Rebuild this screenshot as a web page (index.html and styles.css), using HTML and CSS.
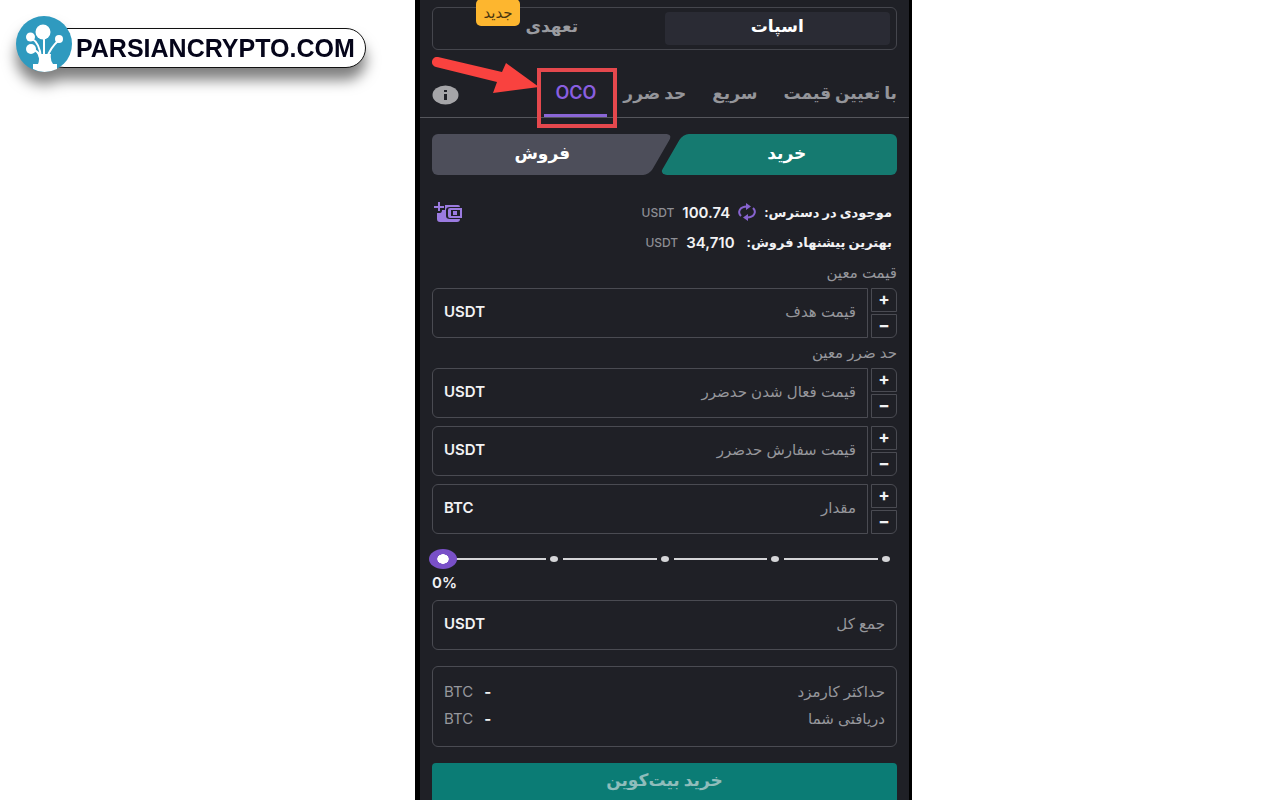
FILE: index.html
```html
<!DOCTYPE html>
<html lang="fa">
<head>
  <meta charset="UTF-8">
  <title>OCO</title>
  <meta name="viewport" content="width=device-width, initial-scale=1">
  <link rel="stylesheet" href="styles.css">
</head>
<body>
  <header class="site">
    <a class="brand" href="#">
      <svg class="brand-logo" viewBox="0 0 56 56" aria-hidden="true">
        <circle cx="28" cy="28" r="28" fill="#2f9abf"/>
        <g fill="#fff">
          <circle cx="27" cy="16" r="7.500"/>
          <circle cx="14.500" cy="21" r="4.500"/>
          <circle cx="43" cy="23" r="4"/>
          <circle cx="15" cy="33" r="5"/>
          <path d="M22 48Q24 43 22 38H35Q34 44 37 48H41V53Q28 59 17 53V48Z"/>
        </g>
        <g fill="none" stroke="#fff" stroke-width="2">
          <path d="M28 20V42M15 22Q24 27 25 42M43 24Q34 32 31 42M16 33Q23 35 24 42"/>
        </g>
      </svg>
      <span class="brand-name">PARSIANCRYPTO.COM</span>
    </a>
  </header>

  <main class="panel" dir="rtl">
    <div class="market">
      <button type="button" class="market-btn active">اسپات</button>
      <button type="button" class="market-btn">تعهدی<span class="badge">جدید</span></button>
    </div>

    <nav class="tabs">
      <a href="#">با تعیین قیمت</a>
      <a href="#">سریع</a>
      <a href="#">حد ضرر</a>
      <a href="#" class="current">OCO</a>
      <button type="button" class="info" aria-label="راهنما">
        <svg viewBox="0 0 27 20" aria-hidden="true">
          <ellipse cx="13.500" cy="10" rx="13" ry="9.500" fill="#a5a5a8"/>
          <path d="M12 5h3v2h-3zM12 9h3v6h-3z" fill="#1f2026"/>
        </svg>
      </button>
      <svg class="arrow" viewBox="0 0 107 38" aria-hidden="true">
        <path d="M6 0L70 15L74 6L107 30L61 36L65 25L4 10A5 5 0 0 1 6 0Z" fill="#f9423f"/>
      </svg>
    </nav>

    <form class="order">
      <div class="sides">
        <button type="button" class="side buy">خرید</button>
        <button type="button" class="side sell">فروش</button>
      </div>

      <div class="balance">
        <div class="balance-row">
          <span>موجودی در دسترس:</span>
          <button type="button" class="icon-btn" aria-label="تازه‌سازی">
            <svg width="18" height="16" viewBox="0 0 18 16" fill="none" stroke="#8763cf" stroke-width="2" aria-hidden="true">
              <path d="M3 12C-1 8 2 2.500 9 2.500M15 4C19 8 16 13.500 9 13.500"/>
              <path d="M8 -1L13 2.500L8 6ZM10 10L5 13.500L10 17Z" fill="#8763cf" stroke="none"/>
            </svg>
          </button>
          <b>100.74</b>
          <small>USDT</small>
          <button type="button" class="icon-btn wallet" aria-label="واریز">
            <svg width="28" height="21" viewBox="0 0 28 21" aria-hidden="true">
              <path d="M11 3H24Q26 3 26 5H16Q12 5 12 8V14Q12 17 16 17H26Q26 20 23 20H6Q3 20 3 17V11H6Q8 11 8 8H11Z" fill="#9b7be0"/>
              <path d="M16 6H28V16H16Q14 16 14 14V8Q14 6 16 6ZM17 8V14H26V8Z" fill="#9b7be0" fill-rule="evenodd"/>
              <path d="M19 9H23V13H19Z" fill="#9b7be0"/>
              <path d="M5 0V9M0 5H10" stroke="#9b7be0" stroke-width="2"/>
            </svg>
          </button>
        </div>
        <div class="balance-row">
          <span>بهترین پیشنهاد فروش:</span>
          <b class="offer">34,710</b>
          <small>USDT</small>
        </div>
      </div>

      <label class="title" for="target">قیمت معین</label>
      <div class="field">
        <div class="stepper">
          <button type="button">+</button>
          <button type="button">−</button>
        </div>
        <div class="box">
          <input type="text" id="target" placeholder="قیمت هدف">
          <span class="unit">USDT</span>
        </div>
      </div>

      <label class="title" for="trigger">حد ضرر معین</label>
      <div class="field">
        <div class="stepper">
          <button type="button">+</button>
          <button type="button">−</button>
        </div>
        <div class="box">
          <input type="text" id="trigger" placeholder="قیمت فعال شدن حدضرر">
          <span class="unit">USDT</span>
        </div>
      </div>
      <div class="field">
        <div class="stepper">
          <button type="button">+</button>
          <button type="button">−</button>
        </div>
        <div class="box">
          <input type="text" aria-label="قیمت سفارش حدضرر" placeholder="قیمت سفارش حدضرر">
          <span class="unit">USDT</span>
        </div>
      </div>
      <div class="field">
        <div class="stepper">
          <button type="button">+</button>
          <button type="button">−</button>
        </div>
        <div class="box">
          <input type="text" aria-label="مقدار" placeholder="مقدار">
          <span class="unit">BTC</span>
        </div>
      </div>

      <div class="slider" dir="ltr">
        <div class="steps">
          <i></i><i></i><i></i><i></i>
        </div>
        <input type="range" id="percent" min="0" max="100" step="25" value="0">
      </div>
      <label class="percent" for="percent" dir="ltr">0%</label>

      <div class="field">
        <div class="box total">
          <input type="text" aria-label="جمع کل" placeholder="جمع کل">
          <span class="unit">USDT</span>
        </div>
      </div>

      <dl class="summary">
        <div>
          <dt>حداکثر کارمزد</dt>
          <dd><b>-</b><span>BTC</span></dd>
        </div>
        <div>
          <dt>دریافتی شما</dt>
          <dd><b>-</b><span>BTC</span></dd>
        </div>
      </dl>

      <button type="submit" class="submit">خرید بیت‌کوین</button>
    </form>
  </main>
</body>
</html>
```

FILE: styles.css
```css
* {
  box-sizing: border-box;
}

body {
  margin: 0;
  display: grid;
  grid-template-columns: 415fr 497fr 368fr;
  min-height: 100vh;
  background: #fff;
  font-family: Inter, "DejaVu Sans", sans-serif;
  font-size: 15px;
}

button,
input {
  font: inherit;
  color: inherit;
  background: none;
  border: 0;
  margin: 0;
  padding: 0;
}

button {
  cursor: pointer;
}

/* logo */
.site {
  padding: 16px;
}

.brand {
  display: flex;
  align-items: flex-start;
  width: max-content;
  color: #05051a;
  text-decoration: none;
  filter: drop-shadow(0 12px 7px rgba(0, 0, 0, 0.5));
}

.brand-logo {
  width: 56px;
  height: 56px;
  position: relative;
  z-index: 1;
}

.brand-name {
  margin: 12px 0 0 -28px;
  padding: 0 10px 0 31px;
  border: 1px solid #111;
  border-radius: 20px;
  background: #fff;
  font: bold 25px/38px "Liberation Sans", sans-serif;
}

/* order panel */
.panel {
  min-width: 0;
  padding: 7px 0 0;
  border: solid #000;
  border-width: 0 3px 0 5px;
  background: #1f2026;
  color: #f2f2f4;
}

.market {
  display: flex;
  margin: 0 12px;
  padding: 4px 6px;
  border: 1px solid #45464d;
  border-radius: 6px;
}

.market-btn {
  flex: 1;
  position: relative;
  height: 33px;
  padding-bottom: 6px;
  border-radius: 4px;
  color: #9a9ba0;
  font-size: 17px;
  font-weight: bold;
}

.market-btn.active {
  background: #2a2b34;
  color: #fff;
}

.badge {
  position: absolute;
  top: -13px;
  left: 37px;
  width: 44px;
  border-radius: 5px;
  background: #fdb62f;
  color: #4a3510;
  font-size: 15px;
  font-weight: normal;
  line-height: 27px;
}

.tabs {
  position: relative;
  display: flex;
  align-items: center;
  height: 50px;
  margin-top: 18px;
  padding: 0 12px;
  border-bottom: 1px solid #55565c;
}

.tabs a {
  margin-left: 26px;
  line-height: 50px;
  color: #94959a;
  font-size: 17px;
  font-weight: bold;
  text-decoration: none;
  white-space: nowrap;
}

.tabs a:nth-child(3) {
  margin-left: 16px;
}

.tabs a.current {
  position: relative;
  height: 49px;
  margin: 0;
  padding: 0 11px;
  border-bottom: 3px solid #8a66d6;
  color: #8a5fe0;
  font-size: 18px;
  font-weight: 600;
}

/* red frame round the active tab */
.tabs a.current::after {
  content: "";
  position: absolute;
  inset: 0 -10px -14px -7px;
  border: 4px solid #e5484d;
}

.info {
  width: 27px;
  height: 20px;
  margin: 4px auto 0 0;
}

.info svg {
  display: block;
}

.arrow {
  position: absolute;
  top: -11px;
  left: 12px;
  width: 107px;
  height: 38px;
}

.order {
  padding: 16px 12px 0;
}

.sides {
  display: flex;
}

.side {
  position: relative;
  flex: 1;
  isolation: isolate;
  overflow: hidden;
  height: 41px;
  padding-bottom: 4px;
  border-radius: 6px;
  color: #fff;
  font-size: 17px;
  font-weight: bold;
}

.side::before {
  content: "";
  position: absolute;
  z-index: -1;
  inset: 0 -30px 0 10px;
  border-radius: 6px;
  background: #157a70;
  transform: skewX(-30deg);
}

.side.buy {
  margin-left: -12px;
  padding-left: 16px;
}

.side.sell {
  padding-right: 20px;
}

.side.sell::before {
  inset: 0 12px 0 -30px;
  background: #4d4e5a;
}

.balance {
  margin-top: 22px;
  padding: 0 5px 0 2px;
}

.balance-row {
  display: flex;
  align-items: center;
  gap: 8px;
  height: 30px;
  font-size: 13px;
  font-weight: bold;
}

.balance b {
  font-size: 15px;
  font-weight: 600;
}

.balance .offer {
  margin-right: 4px;
}

.balance small {
  color: #8d8e94;
  font-size: 12px;
  font-weight: 500;
}

.icon-btn svg {
  display: block;
  overflow: visible;
}

.wallet {
  margin-right: auto;
}

.title {
  display: block;
  height: 31px;
  color: #96979c;
  line-height: 31px;
}

.field {
  display: flex;
  gap: 3px;
  margin-bottom: 8px;
}

.field + .title {
  margin-top: -9px;
}

.stepper {
  display: grid;
  gap: 2px;
  width: 26px;
}

.stepper button {
  height: 24px;
  border: 1px solid #4a4b52;
  border-radius: 0 6px 0 0;
  font-size: 17px;
  font-weight: bold;
  line-height: 18px;
  padding-bottom: 2px;
}

.stepper button:last-child {
  border-radius: 0 0 6px 0;
}

.box {
  display: flex;
  align-items: center;
  flex: 1;
  height: 50px;
  padding: 0 11px 4px;
  border: 1px solid #4a4b52;
  border-radius: 6px 0 0 6px;
}

.box.total {
  border-radius: 6px;
}

.box input {
  flex: 1;
  min-width: 0;
  height: 100%;
  outline: 0;
}

.box input::placeholder {
  color: #96979c;
  opacity: 1;
}

.unit {
  font-weight: 600;
}

.slider {
  position: relative;
  height: 33px;
  padding: 0 7px 0 15px;
}

.steps {
  display: flex;
  height: 100%;
}

.steps i {
  display: flex;
  flex: 1;
  align-items: center;
  gap: 4px;
  padding-left: 5px;
}

.steps i::before {
  content: "";
  flex: 1;
  height: 2px;
  background: #d5d5d8;
}

.steps i::after {
  content: "";
  width: 8px;
  height: 6px;
  border-radius: 50%;
  background: #d5d5d8;
}

.slider input {
  position: absolute;
  inset: 0 -6px 0 -3px;
  height: 100%;
  appearance: none;
}

.slider input::-webkit-slider-thumb {
  appearance: none;
  width: 28px;
  height: 20px;
  border-radius: 50%;
  background: radial-gradient(ellipse 6px 5px, #fff 90%, #7950c8 100%);
}

.percent {
  display: block;
  height: 25px;
  font-weight: 600;
  line-height: 15px;
}

.summary {
  height: 81px;
  margin: 16px 0;
  padding: 11px;
  border: 1px solid #4a4b52;
  border-radius: 6px;
  color: #96979c;
  line-height: 27px;
}

.summary div {
  display: flex;
  justify-content: space-between;
}

.summary dd {
  display: flex;
  gap: 11px;
  margin: 0;
}

.summary b {
  color: #f2f2f4;
}

.submit {
  display: block;
  width: 100%;
  height: 37px;
  padding-bottom: 4px;
  border-radius: 4px 4px 0 0;
  background: #0b7c75;
  color: #8fbdbb;
  font-size: 17px;
  font-weight: bold;
}
```
